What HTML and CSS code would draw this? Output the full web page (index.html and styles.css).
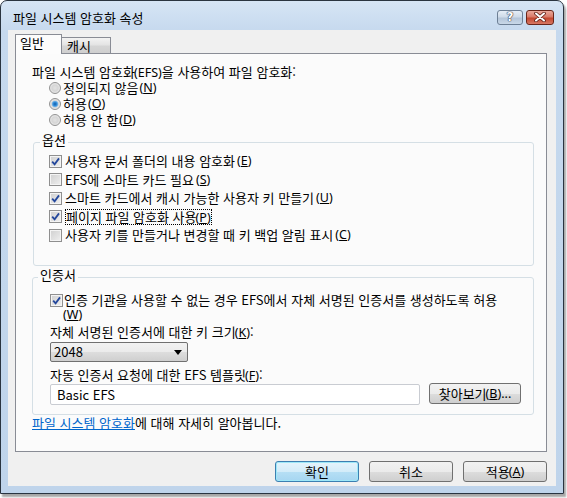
FILE: index.html
```html
<!DOCTYPE html>
<html lang="ko">
<head>
<meta charset="utf-8">
<title>파일 시스템 암호화 속성</title>
<link rel="stylesheet" href="styles.css">
</head>
<body>
<div class="window">
  <div class="titlebar">
    <span class="title">파일 시스템 암호화 속성</span>
    <div class="caption-btns">
      <span class="cbtn help">?</span>
      <span class="cbtn close"><svg width="14" height="10" viewBox="0 0 14 10"><path d="M3 1.5 L11 8.5 M11 1.5 L3 8.5" stroke="#5a1d14" stroke-width="3.6" stroke-linecap="round"/><path d="M3 1.5 L11 8.5 M11 1.5 L3 8.5" stroke="#ffffff" stroke-width="2" stroke-linecap="round"/></svg></span>
    </div>
  </div>
  <div class="face">
    <div class="tabs">
      <div class="tab active">일반</div>
      <div class="tab">캐시</div>
    </div>
    <div class="panel">
      <div class="line">파일 시스템 암호화<span class="k">(EFS)</span>을 사용하여 파일 암호화:</div>
      <div class="radios">
        <div class="opt"><span class="radio"></span>정의되지 않음<span class="k">(<u>N</u>)</span></div>
        <div class="opt"><span class="radio on"></span>허용<span class="k">(<u>O</u>)</span></div>
        <div class="opt"><span class="radio"></span>허용 안 함<span class="k">(<u>D</u>)</span></div>
      </div>
      <fieldset class="group g1">
        <legend>옵션</legend>
        <div class="group-body g1-body">
          <div class="crow"><span class="cb on"><svg width="11" height="11" viewBox="0 0 11 11"><path d="M2.2 5.6 L4.6 8.3 L9 2.4" fill="none" stroke="#23479c" stroke-width="1.8"/></svg></span>사용자 문서 폴더의 내용 암호화<span class="k">(<u>E</u>)</span></div>
          <div class="crow"><span class="cb"></span>EFS에 스마트 카드 필요<span class="k">(<u>S</u>)</span></div>
          <div class="crow"><span class="cb on"><svg width="11" height="11" viewBox="0 0 11 11"><path d="M2.2 5.6 L4.6 8.3 L9 2.4" fill="none" stroke="#23479c" stroke-width="1.8"/></svg></span>스마트 카드에서 캐시 가능한 사용자 키 만들기<span class="k">(<u>U</u>)</span></div>
          <div class="crow"><span class="cb on"><svg width="11" height="11" viewBox="0 0 11 11"><path d="M2.2 5.6 L4.6 8.3 L9 2.4" fill="none" stroke="#23479c" stroke-width="1.8"/></svg></span><span class="focus">페이지 파일 암호화 사용<span class="k">(<u>P</u>)</span></span></div>
          <div class="crow"><span class="cb"></span>사용자 키를 만들거나 변경할 때 키 백업 알림 표시<span class="k">(<u>C</u>)</span></div>
        </div>
      </fieldset>
      <fieldset class="group g2">
        <legend>인증서</legend>
        <div class="group-body g2-body">
          <div class="crow wrap"><span class="cb on"><svg width="11" height="11" viewBox="0 0 11 11"><path d="M2.2 5.6 L4.6 8.3 L9 2.4" fill="none" stroke="#23479c" stroke-width="1.8"/></svg></span><span class="wrap-text">인증 기관을 사용할 수 없는 경우 EFS에서 자체 서명된 인증서를 생성하도록 허용<br><span class="k">(<u>W</u>)</span></span></div>
          <div class="label l1">자체 서명된 인증서에 대한 키 크기<span class="k">(<u>K</u>)</span>:</div>
          <div class="combo"><span>2048</span><svg width="8" height="5" viewBox="0 0 8 5"><path d="M0 0 H8 L4 5 Z" fill="#000"/></svg></div>
          <div class="label l2">자동 인증서 요청에 대한 EFS 템플릿<span class="k">(<u>F</u>)</span>:</div>
          <div class="field-row">
            <div class="field">Basic EFS</div>
            <div class="btn browse">찾아보기<span class="k">(<u>B</u>)...</span></div>
          </div>
        </div>
      </fieldset>
      <div class="link-line"><a class="link">파일 시스템 암호화</a>에 대해 자세히 알아봅니다.</div>
    </div>
    <div class="buttons">
      <div class="btn default">확인</div>
      <div class="btn">취소</div>
      <div class="btn">적용<span class="k">(<u>A</u>)</span></div>
    </div>
  </div>
</div>
</body>
</html>
```
FILE: styles.css
```css
* { box-sizing: border-box; }
html, body { margin: 0; padding: 0; }
body {
  width: 567px;
  height: 498px;
  background: #ffffff;
  font-family: "Noto Sans CJK KR", "Noto Sans", sans-serif;
  font-size: 13px;
  color: #000;
  overflow: hidden;
}
u { text-decoration: underline; text-underline-offset: 1px; }
.k { font-family: "Noto Sans", "DejaVu Sans", sans-serif; font-size: 12.5px; margin-left: -1px; }

.window {
  width: 564px;
  height: 494px;
  border: 1px solid #2a3440;
  border-radius: 7px 7px 0 0;
  background: linear-gradient(180deg, #d6e5f5 0%, #c6d9ee 30px, #bfd4eb 100%);
  box-shadow: 2px 3px 2px rgba(0, 0, 0, 0.35);
  padding: 0 7px 7px;
  display: flex;
  flex-direction: column;
}

.titlebar {
  height: 29px;
  display: flex;
  align-items: center;
  justify-content: space-between;
  padding-left: 5px;
  padding-right: 2px;
}
.title {
  font-size: 13px;
  line-height: 16px;
  padding-top: 4px;
  color: #000;
}
.caption-btns {
  display: flex;
  gap: 3px;
  padding-top: 3px;
}
.cbtn {
  height: 15px;
  border-radius: 3px;
  display: flex;
  align-items: center;
  justify-content: center;
}
.help {
  width: 26px;
  border: 1px solid #6d7f95;
  background: linear-gradient(180deg, #e6eef7 0%, #cfdbe9 45%, #b4c5d9 55%, #c9d8e8 100%);
  color: #fff;
  font-family: "DejaVu Sans", sans-serif;
  font-weight: bold;
  font-size: 12px;
  line-height: 13px;
  text-shadow: 0 0 1px #334, 0 0 1px #334, 0 0 1px #334;
}
.close {
  width: 28px;
  border: 1px solid #6a2519;
  background: linear-gradient(180deg, #eba99b 0%, #d97a68 45%, #c4472f 55%, #d87864 100%);
}

.face {
  flex: 1;
  background: #f0f0f0;
  padding: 4px 9px 0 7px;
  display: flex;
  flex-direction: column;
}

.tabs {
  display: flex;
  align-items: flex-end;
  height: 20px;
  margin-bottom: -1px;
}
.tab {
  height: 16px;
  width: 49px;
  margin-bottom: 1px;
  border: 1px solid #898c95;
  border-left: none;
  border-bottom: none;
  padding-left: 5px;
  line-height: 15px;
  background: linear-gradient(180deg, #f3f3f3 0%, #e4e4e4 45%, #d5d5d5 55%, #cfcfcf 100%);
}
.tab.active {
  height: 20px;
  width: 47px;
  margin-bottom: 0;
  border-left: 1px solid #898c95;
  padding-left: 4px;
  line-height: 16px;
  background: #fcfcfc;
  position: relative;
  z-index: 1;
}

.panel {
  height: 399px;
  border: 1px solid #898c95;
  background: #fbfbfb;
  padding: 10px 12px 0 16px;
  display: flex;
  flex-direction: column;
}
.line { line-height: 16px; height: 16px; }

.radios { margin-left: 17px; }
.opt {
  height: 16px;
  display: flex;
  align-items: center;
  gap: 2px;
  line-height: 16px;
}
.radio {
  width: 12px;
  height: 12px;
  border-radius: 50%;
  border: 1px solid #929292;
  background: radial-gradient(circle at 50% 50%, #e2e2e2 0, #d6d6d6 3px, #f2f2f2 6px);
  flex: none;
}
.radio.on {
  background: radial-gradient(circle at 50% 50%, #0b5fb0 0, #3a8fd8 2px, #7fbbe9 3px, #d8d8d8 3.6px, #e8e8e8 5px, #f4f4f4 6px);
}

.group {
  margin: 0;
  padding: 0;
  border: 1px solid #d5dfe5;
  border-radius: 3px;
  min-inline-size: 0;
}
.group legend {
  padding: 0 2px 4px;
  line-height: 16px;
  height: 20px;
}
.g1 { margin: 4px 0 0 1px; }
.g1 legend { margin-left: 6px; }
.g2 { margin: 1px 0 0 0; }
.g2 legend { margin-left: 5px; }

.g1-body { padding: 0 0 20.5px 15px; }
.g2-body { padding: 6px 0 9px 17px; }

.crow {
  height: 18.5px;
  display: flex;
  align-items: center;
  gap: 3px;
  line-height: 16px;
}
.cb {
  width: 13px;
  height: 13px;
  border: 1px solid #8f8f8f;
  background: linear-gradient(135deg, #d0d0d0 0%, #e2e2e2 60%, #f1f1f1 100%);
  box-shadow: inset 0 0 0 1px #f4f4f4;
  flex: none;
  display: flex;
  align-items: center;
  justify-content: center;
}
.focus {
  outline: 1px dotted #000;
  outline-offset: -1px;
  padding: 0 1px;
  line-height: 15px;
}

.crow.wrap {
  height: auto;
  align-items: flex-start;
  gap: 1px;
}
.crow.wrap .cb { margin-top: 1px; }
.wrap-text { line-height: 14px; }

.label { line-height: 16px; height: 16px; }
.l1 { margin-top: 2px; }
.l2 { margin-top: 5px; }

.combo {
  margin-top: 2px;
  width: 138px;
  height: 20px;
  border: 1px solid #707070;
  border-radius: 2px;
  background: linear-gradient(180deg, #f2f2f2 0%, #ebebeb 50%, #dddddd 51%, #cfcfcf 100%);
  display: flex;
  align-items: center;
  justify-content: space-between;
  padding: 0 5px 0 3px;
  line-height: 16px;
}

.field-row {
  margin-top: 1px;
  display: flex;
  align-items: center;
  gap: 9px;
}
.field {
  width: 370px;
  height: 21px;
  border: 1px solid #c9ccd2;
  border-radius: 2px;
  background: #ffffff;
  padding-left: 6px;
  line-height: 19px;
}

.btn {
  height: 21px;
  border: 1px solid #707070;
  border-radius: 3px;
  background: linear-gradient(180deg, #f2f2f2 0%, #ebebeb 50%, #dddddd 51%, #cfcfcf 100%);
  display: flex;
  align-items: center;
  justify-content: center;
  line-height: 16px;
}
.browse { width: 92px; margin-top: -2px; }

.link-line { line-height: 16px; height: 16px; }
.link { color: #0066cc; text-decoration: underline; }

.buttons {
  margin-top: 9px;
  display: flex;
  justify-content: flex-end;
  gap: 10px;
}
.buttons .btn { width: 84px; }
.btn.default {
  border-color: #3c7fb1;
  background: linear-gradient(180deg, #e5f4fc 0%, #d3ecf9 50%, #b6dff5 51%, #a6d6f1 100%);
  box-shadow: inset 0 0 0 1px #9ee8f8;
}
```
